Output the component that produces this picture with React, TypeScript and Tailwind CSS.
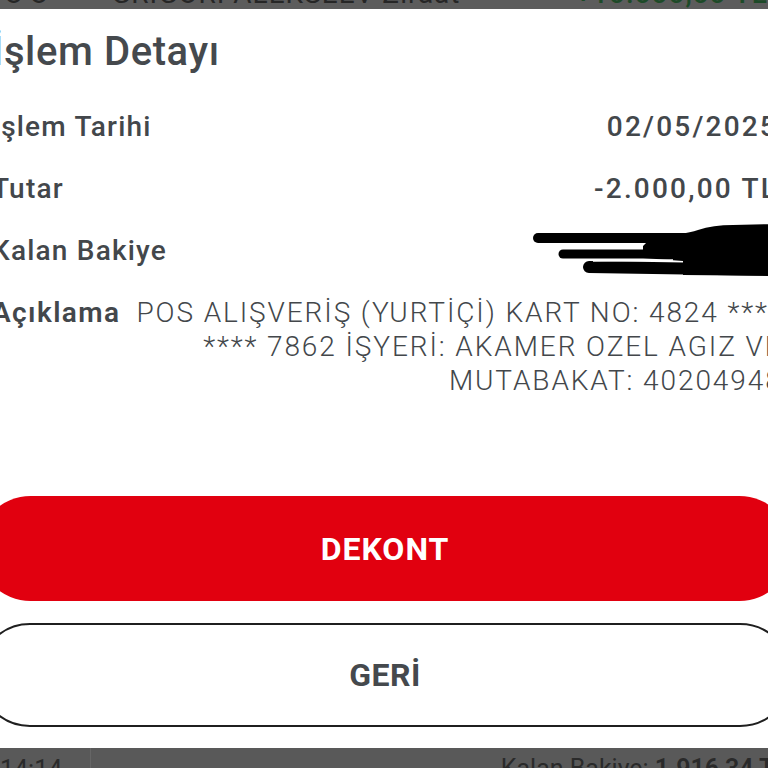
import React from 'react';

const rows = [
  { label: 'İşlem Tarihi', value: '02/05/2025' },
  { label: 'Tutar', value: '-2.000,00 TL' },
];

function Scribble() {
  return (
    <svg width="245" height="54" viewBox="0 0 245 54" className="block">
      <path d="M5 14 L190 14" stroke="#000" strokeWidth="10" strokeLinecap="round" />
      <path d="M30 30 L245 30" stroke="#000" strokeWidth="9" strokeLinecap="round" />
      <path d="M56 43 L245 46" stroke="#000" strokeWidth="12" strokeLinecap="round" />
      <path d="M120 12 Q150 11 165 6 Q180 1 200 1 L245 0 L245 52 L150 51 L150 37 L110 34 L110 22 Z" fill="#000" />
      <path d="M60 37 L140 36" stroke="#fff" strokeWidth="1.5" />
    </svg>
  );
}

export default function App() {
  return (
    <div
      className="w-[768px] h-[768px] overflow-hidden bg-[#5b5b5b] flex flex-col text-[#43474b]"
      style={{ fontFamily: 'Roboto, "Noto Sans", sans-serif' }}
    >
      {/* dimmed list behind the sheet */}
      <div className="h-[9px] shrink-0 overflow-hidden bg-[#5c5c5c]">
        <div className="flex items-start mt-[-22px] text-[28px] leading-[32px] text-[#262626]">
          <span className="w-[113px] pl-[4px] tracking-[6px]">OO</span>
          <span className="w-[472px] tracking-[1px]">GRIGORI ALEKSEEV Ziraat</span>
          <span className="text-[#1d4a28] font-medium whitespace-nowrap tracking-[1px]">+10.000,00 TL</span>
        </div>
      </div>

      {/* sheet */}
      <div className="ml-[-22px] w-[814px] shrink-0 bg-white pt-[19px] pb-[21px] flex flex-col">
        <div className="px-[14px]">
          <h1 className="text-[40px] leading-[48px] font-medium tracking-[0.6px] text-[#45494d]">İşlem Detayı</h1>

          <div className="mt-[34px] flex flex-col gap-[28px] text-[28px] leading-[34px]">
            {rows.map((r) => (
              <div key={r.label} className="flex justify-between">
                <span className="font-medium tracking-[1.2px]">{r.label}</span>
                <span className="font-medium tracking-[2.2px]">{r.value}</span>
              </div>
            ))}
            <div className="flex justify-between items-center h-[34px]">
              <span className="font-medium tracking-[1.2px]">Kalan Bakiye</span>
              <Scribble />
            </div>
            <div className="flex gap-[16px]">
              <span className="font-semibold shrink-0 tracking-[1.4px]">Açıklama</span>
              <p className="flex-1 text-right font-light whitespace-nowrap tracking-[1.9px]">
                <span className="block">POS ALIŞVERİŞ (YURTİÇİ) KART NO: 4824 ****</span>
                <span className="block">**** 7862 İŞYERİ: AKAMER OZEL AGIZ VE</span>
                <span className="block">MUTABAKAT: 40204948</span>
              </p>
            </div>
          </div>
        </div>

        <button className="mt-[98px] h-[105px] w-full rounded-full bg-[#e1000f] text-white text-[32px] font-bold tracking-[1px]">
          DEKONT
        </button>
        <button className="mt-[22px] h-[104px] w-full rounded-full border-2 border-[#1f1f1f] bg-white text-[#45494d] text-[32px] font-bold tracking-[0.5px]">
          GERİ
        </button>
      </div>

      {/* dimmed footer behind the sheet */}
      <div className="flex-1 bg-[#595959] overflow-hidden flex items-start text-[25px] leading-[30px] text-[#2a2a2a]">
        <span className="w-[90px] pt-[7px]">14:14</span>
        <span className="w-px h-full bg-[#666]" />
        <span className="ml-auto pt-[6px] whitespace-nowrap mr-[-20px]">
          Kalan Bakiye: <span className="font-semibold">1.916,34 TL</span>
        </span>
      </div>
    </div>
  );
}
